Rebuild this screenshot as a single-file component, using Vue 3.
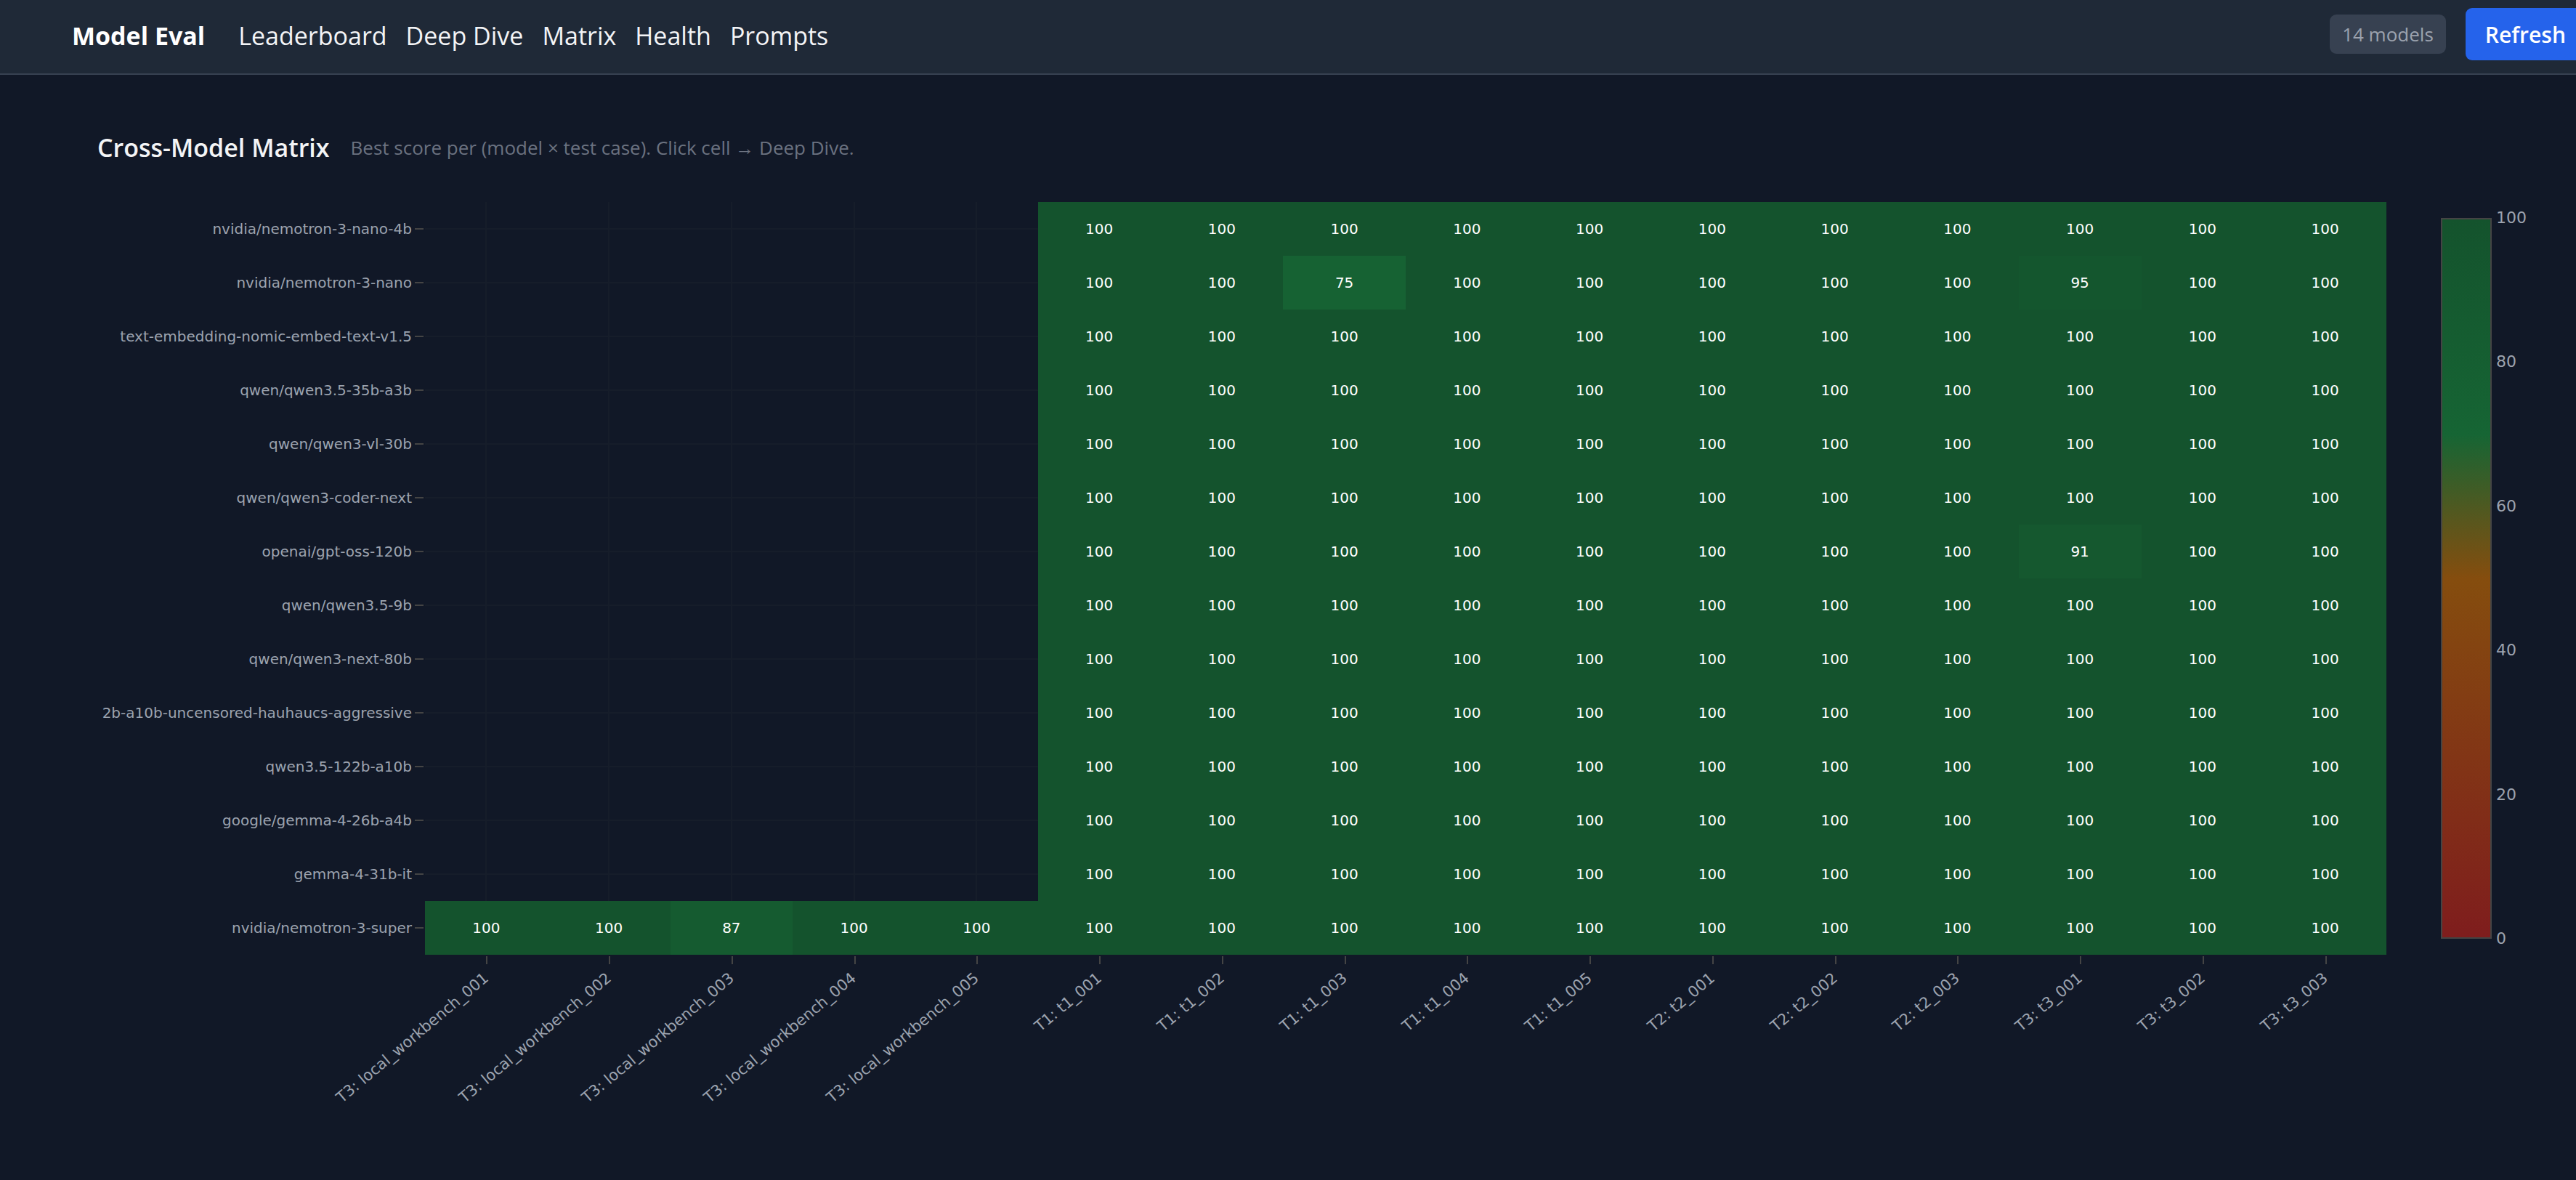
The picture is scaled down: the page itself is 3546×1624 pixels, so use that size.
<script setup>
import { ref } from 'vue';

const links = ['Leaderboard', 'Deep Dive', 'Matrix', 'Health', 'Prompts'];

const models = [
    'nvidia/nemotron-3-nano-4b',
    'nvidia/nemotron-3-nano',
    'text-embedding-nomic-embed-text-v1.5',
    'qwen/qwen3.5-35b-a3b',
    'qwen/qwen3-vl-30b',
    'qwen/qwen3-coder-next',
    'openai/gpt-oss-120b',
    'qwen/qwen3.5-9b',
    'qwen/qwen3-next-80b',
    '2b-a10b-uncensored-hauhaucs-aggressive',
    'qwen3.5-122b-a10b',
    'google/gemma-4-26b-a4b',
    'gemma-4-31b-it',
    'nvidia/nemotron-3-super'
];

const tests = [
    'T3: local_workbench_001',
    'T3: local_workbench_002',
    'T3: local_workbench_003',
    'T3: local_workbench_004',
    'T3: local_workbench_005',
    'T1: t1_001',
    'T1: t1_002',
    'T1: t1_003',
    'T1: t1_004',
    'T1: t1_005',
    'T2: t2_001',
    'T2: t2_002',
    'T2: t2_003',
    'T3: t3_001',
    'T3: t3_002',
    'T3: t3_003'
];

const scaleTicks = [100, 80, 60, 40, 20, 0];

// everything that ran scored 100 except these, keyed by row:column
const exceptions = { '1:7': 75, '1:13': 95, '6:13': 91, '13:2': 87 };

// only the last model ran the local workbench cases
const scoreFor = (row, col) => {
    if (col < 5 && row !== models.length - 1) return null;
    return exceptions[`${row}:${col}`] ?? 100;
};

const rows = models.map((name, row) => ({
    name,
    scores: tests.map((_, col) => scoreFor(row, col))
}));

const stops = [
    [0, [127, 29, 29]],
    [50, [133, 77, 14]],
    [70, [22, 101, 52]],
    [100, [20, 83, 45]]
];

const colorFor = (score) => {
    const i = Math.max(1, stops.findIndex(([at]) => score <= at));
    const [from, a] = stops[i - 1];
    const [to, b] = stops[i];
    const t = (score - from) / (to - from);
    return `rgb(${a.map((c, n) => Math.round(c + (b[n] - c) * t)).join(', ')})`;
};

const selected = ref(null);
</script>

<template>
    <div class="page">
        <header class="topbar">
            <h1>Model Eval</h1>
            <nav>
                <a v-for="link in links" :key="link" href="#">{{ link }}</a>
            </nav>
            <span class="badge">14 models</span>
            <button class="refresh" type="button" @click="selected = null">Refresh</button>
        </header>

        <main>
            <div class="heading">
                <h2>Cross-Model Matrix</h2>
                <p>Best score per (model × test case). Click cell → Deep Dive.</p>
            </div>

            <div class="chart">
                <div class="plot">
                    <table class="matrix">
                        <colgroup>
                            <col class="names">
                            <col v-for="test in tests" :key="test">
                        </colgroup>
                        <tbody>
                            <tr v-for="row in rows" :key="row.name">
                                <th scope="row"><span class="model">{{ row.name }}</span></th>
                                <td v-for="(score, col) in row.scores" :key="col" :class="{ empty: score === null }">
                                    <button
                                        v-if="score !== null"
                                        type="button"
                                        class="cell"
                                        :style="{ backgroundColor: colorFor(score) }"
                                        @click="selected = [row.name, tests[col]]"
                                    >{{ score }}</button>
                                </td>
                            </tr>
                        </tbody>
                        <tfoot>
                            <tr>
                                <td></td>
                                <th v-for="test in tests" :key="test" scope="col">
                                    <span class="test">{{ test }}</span>
                                </th>
                            </tr>
                        </tfoot>
                    </table>
                </div>

                <div class="scale">
                    <div class="bar"></div>
                    <div class="ticks">
                        <span v-for="tick in scaleTicks" :key="tick">{{ tick }}</span>
                    </div>
                </div>
            </div>
        </main>
    </div>
</template>

<style>
body {
    background: #111827;
}
</style>

<style scoped>
.page {
    min-height: 100vh;
    overflow: hidden;
    background: #111827;
    color: #f3f4f6;
    font-family: "Open Sans", "Noto Sans", sans-serif;
}
h1, h2, p {
    margin: 0;
}
.topbar {
    display: flex;
    align-items: center;
    padding: 11px 0 18px 99px;
    background: #1f2937;
    border-bottom: 2px solid #374151;
}
h1, nav {
    padding-top: 4px;
}
h1 {
    font-size: 34px;
    line-height: 48px;
    font-weight: 700;
    color: #fff;
}
nav {
    display: flex;
    gap: 26px;
    margin-left: 46px;
}
nav a {
    font-size: 34px;
    line-height: 48px;
    color: inherit;
    text-decoration: none;
}
.badge {
    margin-left: auto;
    padding: 9px 17px;
    border-radius: 9px;
    background: #374151;
    color: #9ca3af;
    font-size: 26px;
    line-height: 36px;
}
.refresh {
    height: 72px;
    margin-left: 27px;
    margin-right: -13px;
    padding: 0 27px;
    border: 0;
    border-radius: 9px;
    background: #2563eb;
    color: #fff;
    font: 600 30px "Open Sans", "Noto Sans", sans-serif;
    cursor: pointer;
}
main {
    padding: 76px 36px 0 134px;
}
.heading {
    display: flex;
    align-items: center;
    gap: 29px;
    margin-bottom: 51px;
}
h2 {
    font-size: 34px;
    line-height: 48px;
    font-weight: 600;
}
.heading p {
    font-size: 26px;
    line-height: 36px;
    color: #6b7280;
}
.chart {
    display: flex;
    gap: 75px;
    font-family: Verdana, "DejaVu Sans", sans-serif;
    color: #9ca3af;
}
.plot {
    flex: 1;
    min-width: 0;
}
.matrix {
    width: 100%;
    table-layout: fixed;
    border-collapse: collapse;
}
.names {
    width: 451px;
}
.matrix th, .matrix td {
    padding: 0;
    font-size: 20px;
    font-weight: 400;
}
tbody th {
    height: 74px;
}
.model {
    display: flex;
    align-items: center;
    justify-content: flex-end;
    gap: 4px;
    padding-right: 2px;
    white-space: nowrap;
}
.model::after {
    content: "";
    flex: none;
    width: 12px;
    height: 2px;
    background: #444;
}
.empty {
    background:
        linear-gradient(#161d2a, #161d2a) center / 2px 100% no-repeat,
        linear-gradient(#161d2a, #161d2a) center / 100% 2px no-repeat;
}
.cell {
    display: block;
    width: 100%;
    height: 74px;
    padding: 0;
    border: 0;
    color: #fff;
    font: 20px Verdana, "DejaVu Sans", sans-serif;
    cursor: pointer;
}
tfoot th {
    position: relative;
    height: 220px;
}
tfoot th::before {
    content: "";
    position: absolute;
    top: 2px;
    left: 50%;
    width: 2px;
    height: 11px;
    background: #444;
}
.test {
    position: absolute;
    top: 17px;
    right: 50%;
    font-size: 21px;
    line-height: 24px;
    white-space: nowrap;
    transform: rotate(-40deg);
    transform-origin: right center;
}
.scale {
    display: flex;
    gap: 6px;
    height: 992px;
    margin-top: 22px;
}
.bar {
    box-sizing: border-box;
    width: 70px;
    border: 2px solid #444;
    background: linear-gradient(to top, #7f1d1d, #854d0e 50%, #166534 70%, #14532d);
}
.ticks {
    display: flex;
    flex-direction: column;
    justify-content: space-between;
    width: 74px;
    margin: -14px 0;
    font-size: 22px;
    line-height: 28px;
}
</style>
